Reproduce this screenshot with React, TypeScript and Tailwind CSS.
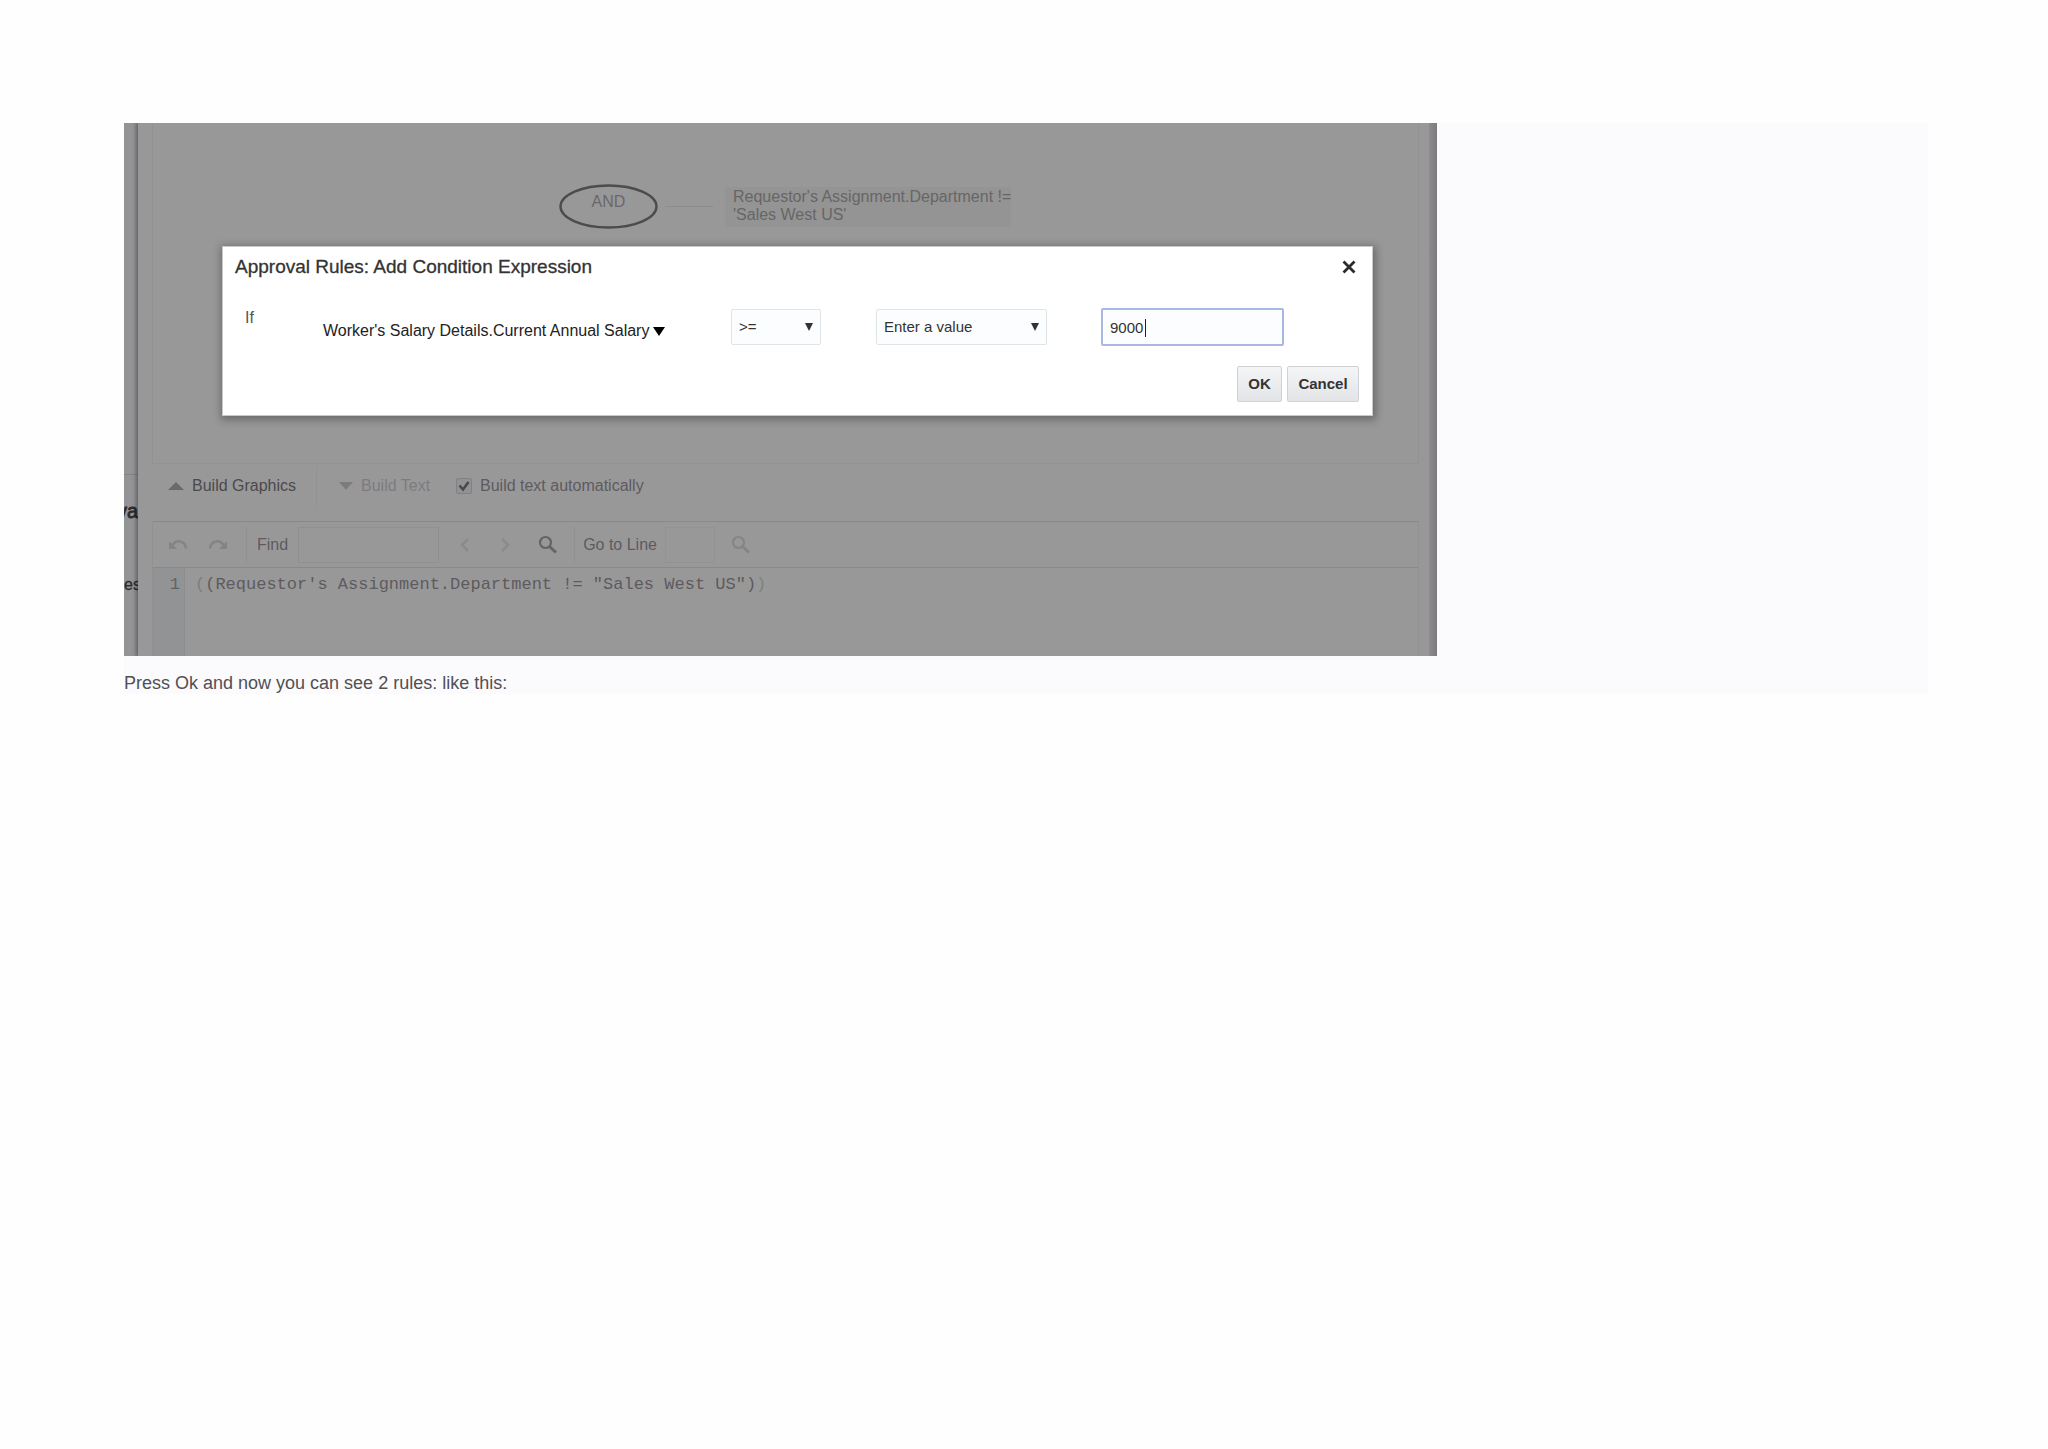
import React, { useState } from 'react';

const UndoIcon: React.FC<{ flipped?: boolean }> = ({ flipped }) => (
  <svg viewBox="0 0 20 14" className={`w-5 h-3.5 ${flipped ? '-scale-x-100' : ''}`} fill="none">
    <path d="M4.5 7C8 1.5 17 2 18 10.5" stroke="#858386" strokeWidth="2.5" />
    <path d="M1 3v8h8z" fill="#858386" />
  </svg>
);

const SearchIcon: React.FC<{ color: string }> = ({ color }) => (
  <svg viewBox="0 0 20 20" className="w-5 h-5" fill="none" stroke={color}>
    <circle cx="7.5" cy="7.5" r="5.5" strokeWidth="2.2" />
    <path d="M11.5 11.5l6.5 6" strokeWidth="3" />
  </svg>
);

const Triangle: React.FC<{ className: string; up?: boolean }> = ({ className, up }) => (
  <svg viewBox="0 0 10 10" preserveAspectRatio="none" className={className} fill="currentColor">
    <path d={up ? 'M0 10h10L5 0z' : 'M0 0h10L5 10z'} />
  </svg>
);

const RuleCanvas: React.FC = () => (
  <div className="relative h-[341px] border-x border-b border-[#929193]">
    <div className="absolute left-[406px] top-[61px] w-[99px] h-[45px]">
      <svg viewBox="0 0 99 45" className="absolute inset-0 w-full h-full" fill="none">
        <ellipse cx="49.5" cy="22.5" rx="48" ry="21" stroke="#4c4c4c" strokeWidth="2.4" />
      </svg>
      <div className="relative pt-2 text-center text-base leading-5 text-[#686868]">AND</div>
    </div>
    <div className="absolute left-[512px] top-[83px] w-12 h-px bg-[#8c8c8c]" />
    <div className="absolute left-[572px] top-[64px] w-[286px] h-10 bg-[#949494] pl-2 pt-px text-base leading-[18px] text-[#666] whitespace-nowrap">
      Requestor's Assignment.Department !=
      <br />
      'Sales West US'
    </div>
  </div>
);

const BuildTabs: React.FC = () => {
  const [automatic, setAutomatic] = useState(true);

  return (
    <div className="flex items-center h-[57px] pl-4 pb-3.5 text-base text-[#555356]">
      <button className="flex items-center gap-2 w-[149px] h-10 border-r border-[#939194] text-[#4b494c]">
        <Triangle up className="w-4 h-2 text-[#6b696c]" />
        Build Graphics
      </button>
      <button className="flex items-center gap-2 w-[139px] pl-[22px] text-[#7d7b7e]">
        <Triangle className="w-3.5 h-2" />
        Build Text
      </button>
      <label className="flex items-center gap-2 whitespace-nowrap text-[#5d5b5e]">
        <span className="relative flex">
          <input
            type="checkbox"
            checked={automatic}
            onChange={(e) => setAutomatic(e.target.checked)}
            className="appearance-none w-4 h-4 rounded-xs border border-[#828083] bg-[#939194]"
          />
          {automatic && (
            <svg viewBox="0 0 16 16" className="absolute inset-0 w-4 h-4 pointer-events-none" fill="none">
              <path d="M3.5 7.5l3.5 4L12.5 4" stroke="#4a484b" strokeWidth="2.6" />
            </svg>
          )}
        </span>
        Build text automatically
      </label>
    </div>
  );
};

const EditorToolbar: React.FC = () => (
  <div className="flex items-center h-[47px] border-y border-[#8a888b] pl-[15px] text-base text-[#5d5b5e]">
    <div className="flex items-center gap-5 w-[79px] h-9 border-r border-[#919092]">
      <button aria-label="Undo">
        <UndoIcon />
      </button>
      <button aria-label="Redo">
        <UndoIcon flipped />
      </button>
    </div>
    <label className="flex items-center gap-2.5 pl-2.5">
      Find
      <input type="text" className="w-[141px] h-9 border border-[#918f92]" />
    </label>
    <div className="flex items-center justify-between w-[136px] h-9 pl-5 pr-4 border-r border-[#919092] text-[#8c8a8d]">
      <button aria-label="Previous match">
        <svg viewBox="0 0 12 16" className="w-3 h-4" fill="none" stroke="currentColor" strokeWidth="2.5">
          <path d="M9 2L3 8l6 6" />
        </svg>
      </button>
      <button aria-label="Next match">
        <svg viewBox="0 0 12 16" className="w-3 h-4" fill="none" stroke="currentColor" strokeWidth="2.5">
          <path d="M3 2l6 6-6 6" />
        </svg>
      </button>
      <button aria-label="Search">
        <SearchIcon color="#656366" />
      </button>
    </div>
    <label className="flex items-center gap-2 pl-2 whitespace-nowrap">
      Go to Line
      <input type="text" className="w-[50px] h-9 border border-[#949295]" />
    </label>
    <button aria-label="Go" className="ml-4">
      <SearchIcon color="#868487" />
    </button>
  </div>
);

const ConditionDialog: React.FC = () => {
  const [operator, setOperator] = useState('>=');
  const [source, setSource] = useState('Enter a value');
  const [value, setValue] = useState('9000');

  return (
    <div
      role="dialog"
      aria-labelledby="dialog-title"
      className="absolute left-[98px] right-16 top-[123px] bg-white border border-[#c9c9c9] shadow-[1px_2px_8px_2px_rgba(0,0,0,0.3)] text-[15px] text-[#333] pb-[13px]"
    >
      {/* Header */}
      <div className="flex items-center justify-between h-10 pl-3 pr-4">
        <h2 id="dialog-title" className="text-[19px] text-[#333] [-webkit-text-stroke:0.3px_#333]">
          Approval Rules: Add Condition Expression
        </h2>
        <button aria-label="Close">
          <svg viewBox="0 0 14 14" className="w-3.5 h-3.5" fill="none" stroke="#2b2b2b" strokeWidth="2.8">
            <path d="M1.5 1.5l11 11M12.5 1.5l-11 11" />
          </svg>
        </button>
      </div>

      {/* Condition row */}
      <div className="flex items-center h-11 mt-[18px] pl-[22px]">
        <span className="w-[78px] pb-[18px] text-base text-[#555]">If</span>
        <button className="flex items-center gap-1 w-[408px] pt-2 text-base text-[#222] whitespace-nowrap">
          Worker's Salary Details.Current Annual Salary
          <Triangle className="w-3 h-[9px] text-black" />
        </button>
        <div className="relative w-[90px]">
          <select
            aria-label="Operator"
            value={operator}
            onChange={(e) => setOperator(e.target.value)}
            className="appearance-none w-full h-9 pl-[7px] bg-[#fcfdff] border border-[#dfe4e7] rounded-xs"
          >
            <option>&gt;=</option>
            <option>&lt;=</option>
            <option>=</option>
          </select>
          <Triangle className="absolute right-2 top-3.5 w-2 h-2 pointer-events-none" />
        </div>
        <div className="relative w-[171px] ml-[55px]">
          <select
            aria-label="Value source"
            value={source}
            onChange={(e) => setSource(e.target.value)}
            className="appearance-none w-full h-9 pl-[7px] bg-[#fcfdff] border border-[#dfe4e7] rounded-xs"
          >
            <option>Enter a value</option>
            <option>Select an attribute</option>
          </select>
          <Triangle className="absolute right-2 top-3.5 w-2 h-2 pointer-events-none" />
        </div>
        <div className="relative w-[183px] ml-[54px]">
          <input
            type="text"
            aria-label="Value"
            value={value}
            onChange={(e) => setValue(e.target.value)}
            className="w-full h-[38px] pl-[7px] bg-[#fcfdff] border-2 border-[#a9b8e2] rounded-xs outline-none"
          />
          <span className="absolute left-11 top-[11px] w-px h-[18px] bg-[#222]" />
        </div>
      </div>

      {/* Actions */}
      <div className="flex justify-end gap-[5px] mt-[17px] pr-[13px] font-bold">
        <button className="w-[45px] h-9 border border-[#cfd1d4] rounded-xs bg-linear-to-b from-[#f4f5f6] to-[#e2e4e7]">
          OK
        </button>
        <button className="w-[72px] h-9 border border-[#cfd1d4] rounded-xs bg-linear-to-b from-[#f4f5f6] to-[#e2e4e7]">
          Cancel
        </button>
      </div>
    </div>
  );
};

const App: React.FC = () => {
  return (
    <div className="min-h-screen bg-[#fefefe] pt-[123px] pl-[124px] pr-[120px] font-['Liberation_Sans',Arial,sans-serif]">
      <article className="bg-[#fbfafc]">
        <div className="relative flex w-full max-w-[1313px] overflow-hidden bg-[#999899]">
          {/* Page behind the panel */}
          <div className="flex flex-col items-end w-3.5 shrink-0 overflow-hidden bg-[#949395] pt-[351px] text-[#2c2c2c]">
            <div className="w-full h-px bg-[#858386]" />
            <div className="pt-[22px] text-xl leading-7 [-webkit-text-stroke:0.8px_#2c2c2c]">va</div>
            <div className="self-start pt-[50px] text-base leading-5 [-webkit-text-stroke:0.3px_#2c2c2c]">es</div>
          </div>

          {/* Rule builder */}
          <div className="flex-1 min-w-0 pl-3.5 pr-2.5 shadow-[-1px_0_4px_1px_rgba(0,0,0,0.35)]">
            <RuleCanvas />
            <BuildTabs />
            <div className="border-x border-[#929093]">
              <EditorToolbar />
              <div className="flex h-[88px] font-['Liberation_Mono','Courier_New',monospace] text-[17px] leading-5 text-[#5d5b5e]">
                <div className="w-8 pt-[7px] pr-1 text-right bg-[#929395] border-r border-[#8c8d8f] text-[#5f6367]">1</div>
                <code className="pl-2.5 pt-[7px] font-['Liberation_Mono','Courier_New',monospace] whitespace-pre">
                  <span className="text-[#7b7d7c]">(</span>
                  {'(Requestor\'s Assignment.Department != "Sales West US")'}
                  <span className="text-[#7b837c]">)</span>
                </code>
              </div>
            </div>
          </div>
          <div className="w-2 shrink-0 bg-linear-to-r from-[#8d8b8e] to-[#7c7a7d]" />

          <ConditionDialog />
        </div>
        <p className="pt-4 text-lg leading-[22px] text-[#505055]">Press Ok and now you can see 2 rules: like this:</p>
      </article>
    </div>
  );
};

export default App;
